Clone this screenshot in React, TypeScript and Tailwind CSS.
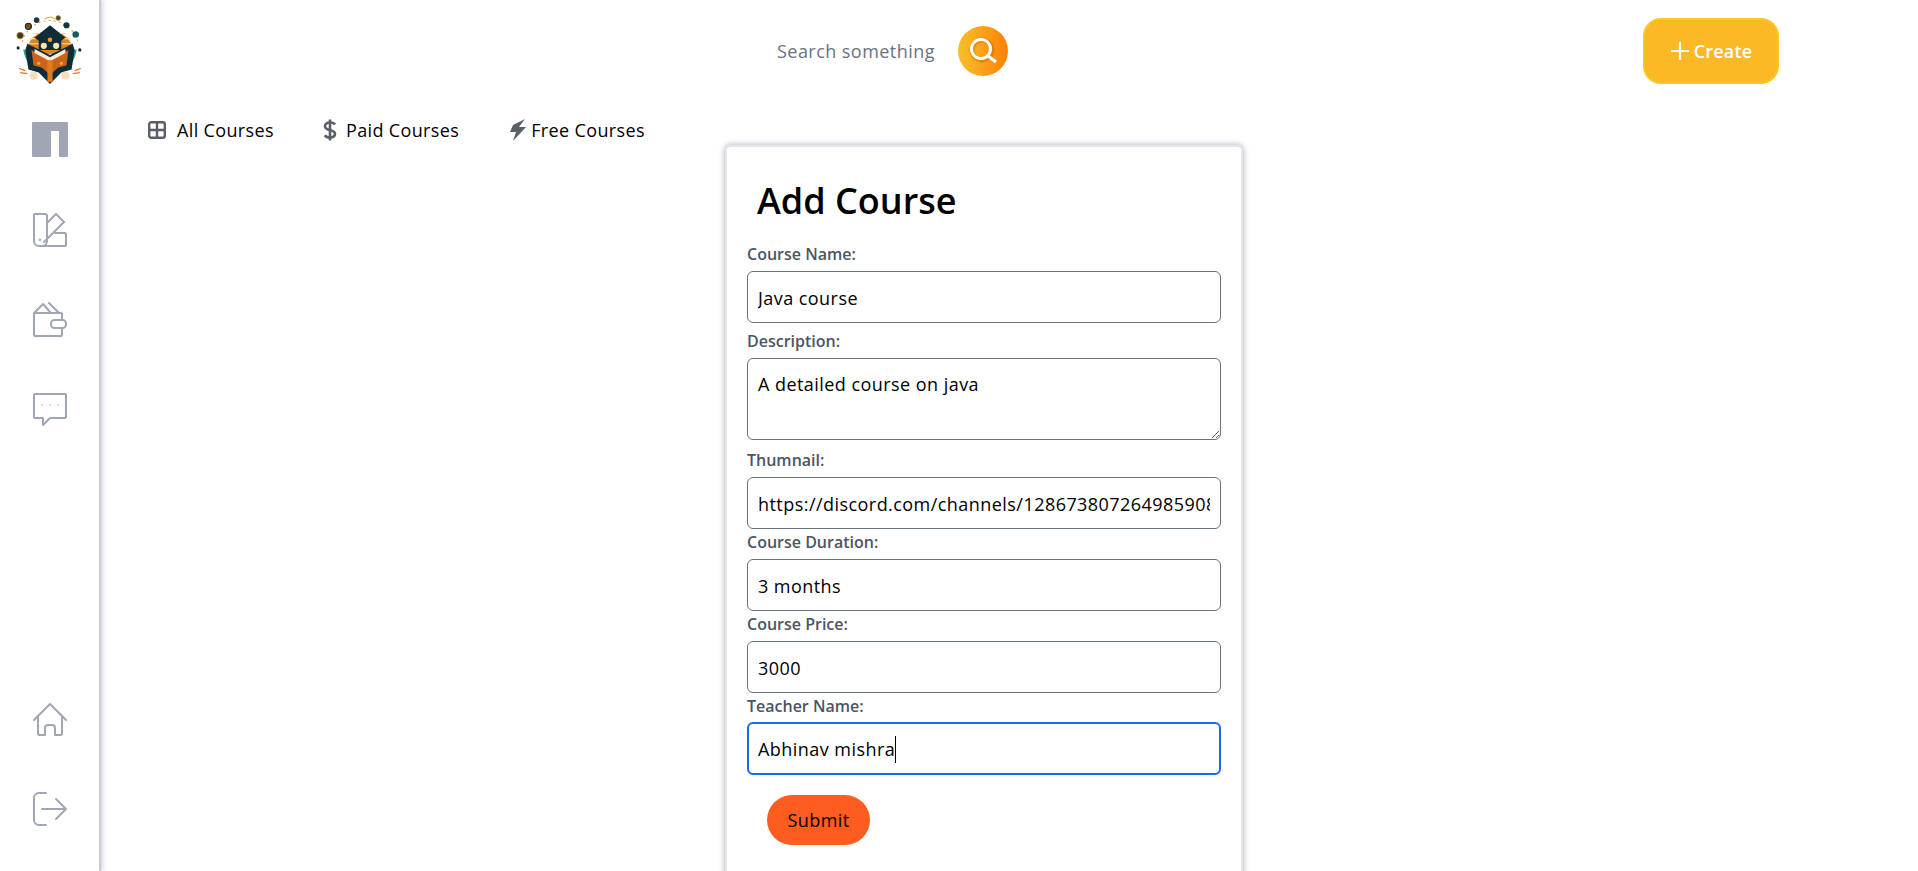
import React from "react";

const font = { fontFamily: '"Open Sans", "Noto Sans", sans-serif' };

function Logo() {
  return (
    <svg width="72" height="72" viewBox="0 0 70 70">
      <g stroke="#f0a33c" strokeWidth="1" strokeDasharray="2 3" fill="none">
        <path d="M8 26a28 28 0 0 1 54 0" />
      </g>
      <path d="M12 38a23 23 0 1 1 46 0z" fill="#dd851c" />
      <path d="M19 18h32M15 23h40M13 28h44" stroke="#f8dcae" strokeWidth="1.1" />
      <path d="M9 33c5 2 9 7 10 17-6-3-9-9-10-17z" fill="#27a77a" />
      <path d="M61 33c-5 2-9 7-10 17 6-3 9-9 10-17z" fill="#27a77a" />
      <path d="M35 10l15 12-4 3v9H24v-9l-4-3z" fill="#102c38" />
      <circle cx="35" cy="24" r="2.2" fill="#f0992c" />
      <circle cx="29" cy="30" r="3" fill="#f9e3b3" />
      <circle cx="41" cy="30" r="3" fill="#f9e3b3" />
      <path d="M13 28l22 11 22-11 2 6-3 19-10 3-11 11-11-11-10-3-3-19z" fill="#102c38" />
      <path d="M17 34l18 10 18-10-2 15-8 2-8 7-8-7-8-2z" fill="#c9641a" />
      <path d="M20 33l15 8 15-8v4l-15 8-15-8z" fill="#f8edd4" />
      <rect x="32.500" y="44" width="5" height="21" fill="#e37c1c" />
      <circle cx="19" cy="59" r="4" fill="#f6dfbe" />
      <circle cx="50" cy="59" r="4" fill="#f6dfbe" />
      <circle cx="24" cy="47" r="1.600" fill="#eda93b" />
      <circle cx="46" cy="47" r="1.600" fill="#eda93b" />
      <circle cx="6" cy="20" r="3.200" fill="#2e3a34" stroke="#c77f22" strokeWidth="0.800" />
      <circle cx="14" cy="11" r="3" fill="#7a4a18" stroke="#123" strokeWidth="1" />
      <circle cx="22" cy="5" r="2.700" fill="#1b3d46" />
      <circle cx="43" cy="3" r="2.400" fill="#37503a" stroke="#c77f22" strokeWidth="0.600" />
      <circle cx="51" cy="10" r="3" fill="#123542" />
      <circle cx="60" cy="19" r="3.200" fill="#1c5a63" />
      <circle cx="64" cy="34" r="1.600" fill="#15262c" />
      <circle cx="4" cy="32" r="1.500" fill="#15262c" />
      <path d="M5 52l6 2M6 56l7 1M59 54l6-2M57 57l7-1" stroke="#e2762c" strokeWidth="1.200" />
      <path d="M30 4q5-4 10 0" stroke="#efb15a" strokeWidth="1.200" fill="none" />
    </svg>
  );
}

function NavIcon({ children }: { children: React.ReactNode }) {
  return (
    <svg
      width="36"
      height="36"
      viewBox="0 0 36 36"
      fill="none"
      stroke="#a0a6b3"
      strokeWidth="2"
      strokeLinecap="round"
      strokeLinejoin="round"
    >
      {children}
    </svg>
  );
}

const inputClass =
  "block w-full h-[52px] rounded-[6px] border border-[#6b7280] px-[10px] pt-[1px] text-[18px] tracking-[0.45px] text-black bg-white outline-none";
const labelClass =
  "mb-[5px] block h-[24px] text-[16px] font-semibold leading-[24px] text-[#4b5563]";

function Field({ label, value, gap }: { label: string; value: string; gap: string }) {
  return (
    <div className={gap}>
      <label className={labelClass}>{label}</label>
      <input readOnly value={value} className={inputClass} style={font} />
    </div>
  );
}

export default function App() {
  return (
    <div className="flex h-screen overflow-hidden bg-white" style={font}>
      <aside className="flex w-[101px] shrink-0 flex-col items-center border-r-2 border-[#c9ccd6] pb-[44px] pt-[15px] shadow-[2px_0_4px_rgba(140,145,165,0.35)]">
        <Logo />
        <div className="mt-[35px] flex flex-col items-center gap-[54px]">
          <NavIcon>
            <path
              d="M1 0h34a1 1 0 0 1 1 1v33a1 1 0 0 1-1 1h-7a1 1 0 0 1-1-1V9H19v25a1 1 0 0 1-1 1H1a1 1 0 0 1-1-1V1a1 1 0 0 1 1-1z"
              fill="#a0a6b3"
              stroke="none"
            />
          </NavIcon>
          <NavIcon>
            <path d="M3 2h10a2 2 0 0 1 2 2v25a5 5 0 0 1-5 5H7a5 5 0 0 1-5-5V3a1 1 0 0 1 1-1z" />
            <path d="M15 11l9-9 8 8-20 20" />
            <path d="M23 21h10a1 1 0 0 1 1 1v11a1 1 0 0 1-1 1H8" />
            <circle cx="8" cy="28" r="0.4" />
          </NavIcon>
          <NavIcon>
            <path d="M2 11h27a1 1 0 0 1 1 1v5M30 27v6a1 1 0 0 1-1 1H3a1 1 0 0 1-1-1V11" />
            <rect x="19" y="18" width="15" height="8" rx="3.500" />
            <path d="M2 11L11 2l8 9M17 1l9 9" />
          </NavIcon>
          <NavIcon>
            <path d="M3 2h30a1 1 0 0 1 1 1v22a1 1 0 0 1-1 1H18l-7 7v-7H3a1 1 0 0 1-1-1V3a1 1 0 0 1 1-1z" />
            <path d="M10 13h.01M18 13h.01M26 13h.01" strokeWidth="1.400" />
          </NavIcon>
        </div>
        <div className="mt-auto flex flex-col items-center gap-[53px]">
          <NavIcon>
            <path d="M2 18L18 2l16 16" />
            <path d="M6 15v17a1 1 0 0 0 1 1h6v-7a3 3 0 0 1 3-3h4a3 3 0 0 1 3 3v7h6a1 1 0 0 0 1-1V15" />
          </NavIcon>
          <NavIcon>
            <path d="M14 2H7a5 5 0 0 0-5 5v22a5 5 0 0 0 5 5h7" />
            <path d="M10 18h24M24 8l10 10-10 10" />
          </NavIcon>
        </div>
      </aside>

      <main className="flex min-w-0 flex-1 flex-col">
        <header className="flex h-[115px] shrink-0 items-start">
          <div className="ml-[676px] mt-[26px] flex items-center gap-[23px]">
            <span className="pt-[1px] text-[18px] tracking-[0.45px] text-[#6b7280]">Search something</span>
            <div className="flex h-[50px] w-[50px] items-center justify-center rounded-full bg-linear-to-r from-[#f5c02a] to-[#ff7f00]">
              <svg width="32" height="32" viewBox="0 0 32 32" fill="none">
                <circle cx="15" cy="15" r="10" stroke="#b96d00" strokeOpacity="0.45" strokeWidth="5" />
                <circle cx="14" cy="14" r="9.500" stroke="#fff" strokeWidth="3" />
                <path d="M21 21l8 6" stroke="#fff" strokeWidth="3.200" />
              </svg>
            </div>
          </div>
          <button className="ml-auto mr-[139px] mt-[18px] flex h-[66px] w-[136px] items-center justify-center gap-[4px] rounded-[18px] border-2 border-[#fcc62b] bg-[#fdb825] text-[18px] font-semibold tracking-[0.2px] text-white">
            <svg width="20" height="20" viewBox="0 0 20 20" stroke="#fff" strokeWidth="2.200">
              <path d="M10 1v18M1 10h18" />
            </svg>
            Create
          </button>
        </header>

        <nav className="flex h-[30px] shrink-0 items-center pl-[47px] text-[18px] tracking-[0.36px] text-black">
          <span className="flex items-center gap-[11px]">
            <svg width="18" height="18" viewBox="0 0 18 18" fill="none" stroke="#5a5f68" strokeWidth="2.400">
              <rect x="1.200" y="1.200" width="15.600" height="15.600" rx="2" />
              <path d="M9 1v16M1 9h16" />
            </svg>
            All Courses
          </span>
          <span className="ml-[49px] flex items-center gap-[9px]">
            <svg width="14" height="22" viewBox="0 0 14 22" fill="none" stroke="#5a5f68" strokeWidth="2.600">
              <path d="M12 5.500C11 4 9 3.500 7 3.500c-3 0-5 1.500-5 3.700 0 5 10 2.600 10 7.600 0 2.200-2 3.700-5 3.700-2.200 0-4.200-.7-5.200-2.300" />
              <path d="M7 0.500v21" />
            </svg>
            Paid Courses
          </span>
          <span className="ml-[50px] flex items-center gap-[4px]">
            <svg width="18" height="22" viewBox="0 0 18 22" fill="#5a5f68">
              <path d="M16 0L4 6 1 13h6l-3 9L17 8h-7l3-4z" />
            </svg>
            Free Courses
          </span>
        </nav>

        <div className="ml-[624px] h-[800px] w-[518px] shrink-0 rounded-[6px] border-2 border-[#e5e7eb] bg-white px-[20px] pt-[29px] shadow-[0_0_6px_rgba(90,100,130,0.55)]">
          <h1 className="mb-[16px] ml-[10px] text-[36px] font-semibold leading-[50px] text-black">Add Course</h1>
          <Field label="Course Name:" value="Java course" gap="" />
          <div className="mt-[6px]">
            <label className={labelClass}>Description:</label>
            <textarea
              readOnly
              value="A detailed course on java"
              className="block h-[82px] w-full rounded-[6px] border border-[#6b7280] px-[10px] py-[12px] text-[18px] tracking-[0.45px] text-black outline-none"
              style={font}
            />
          </div>
          <Field
            label="Thumnail:"
            value="https://discord.com/channels/1286738072649859088/1286738072649859091"
            gap="mt-[8px]"
          />
          <Field label="Course Duration:" value="3 months" gap="mt-[1px]" />
          <Field label="Course Price:" value="3000" gap="mt-[1px]" />
          <div className="mt-[1px]">
            <label className={labelClass}>Teacher Name:</label>
            <div className="relative -mt-[1px]">
              <input
                readOnly
                value="Abhinav mishra"
                className="block h-[53px] w-full rounded-[6px] border-2 border-[#1a6bea] bg-white px-[9px] pt-[1px] text-[18px] tracking-[0.45px] text-black outline-none"
                style={font}
              />
              <span className="absolute left-[148px] top-[14px] h-[27px] w-px bg-black" />
            </div>
          </div>
          <button className="ml-[20px] mt-[20px] block h-[50px] w-[103px] rounded-full bg-[#ff5c1f] text-[18px] tracking-[0.4px] text-black">
            Submit
          </button>
        </div>
      </main>
    </div>
  );
}
